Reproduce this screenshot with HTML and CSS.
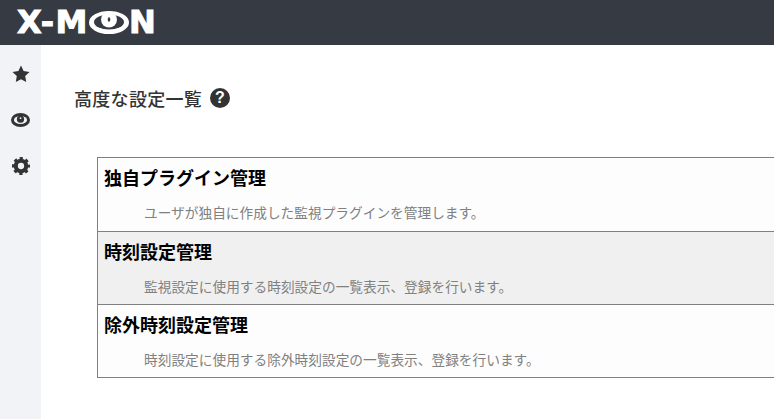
FILE: index.html
```html
<!DOCTYPE html>
<html lang="ja">
<head>
  <meta charset="UTF-8" />
  <title>高度な設定一覧</title>
  <link rel="stylesheet" href="styles.css">
</head>
<body>
  <header class="topbar">
    <div class="logo">
      <span class="logo-text">X-M</span>
      <svg class="logo-eye" width="40" height="23" viewBox="0 0 40 23">
        <ellipse cx="20" cy="11.5" rx="20" ry="11.5" fill="#fff"/>
        <ellipse cx="20" cy="11" rx="15" ry="7.5" fill="#363a43"/>
        <circle cx="20" cy="8.5" r="8" fill="#fff"/>
        <ellipse cx="20" cy="8.5" rx="1.3" ry="2.2" fill="#363a43"/>
      </svg>
      <span>N</span>
    </div>
  </header>
  <div class="layout">
    <nav class="sidebar">
      <svg class="nav-icon" width="18" height="18" viewBox="0 0 18 18">
        <path d="M9 .6l2.6 5.5 5.9.8-4.3 4.2 1 6-5.2-2.9-5.2 2.9 1-6L.5 6.9l5.9-.8z" fill="#333"/>
      </svg>
      <svg class="nav-icon" width="19" height="14" viewBox="0 0 19 14">
        <ellipse cx="9.5" cy="7" rx="9.5" ry="7" fill="#333"/>
        <ellipse cx="9.5" cy="7" rx="6.6" ry="4" fill="#f2f3f7"/>
        <circle cx="9.5" cy="6.2" r="3.6" fill="#333"/>
        <circle cx="9.5" cy="5.2" r="0.9" fill="#f2f3f7"/>
      </svg>
      <svg class="nav-icon" width="18" height="18" viewBox="0 0 20 20">
        <circle cx="10" cy="10" r="8.6" fill="none" stroke="#333" stroke-width="2.8" stroke-dasharray="3.6 3.155" stroke-dashoffset="1.8"/>
        <circle cx="10" cy="10" r="5.8" fill="none" stroke="#333" stroke-width="4.6"/>
      </svg>
    </nav>
    <main class="content">
      <h1 class="page-title">
        高度な設定一覧
        <span class="help">?</span>
      </h1>
      <div class="setting-list">
        <div class="setting-row">
          <h2>独自プラグイン管理</h2>
          <p>ユーザが独自に作成した監視プラグインを管理します。</p>
        </div>
        <div class="setting-row active">
          <h2>時刻設定管理</h2>
          <p>監視設定に使用する時刻設定の一覧表示、登録を行います。</p>
        </div>
        <div class="setting-row">
          <h2>除外時刻設定管理</h2>
          <p>時刻設定に使用する除外時刻設定の一覧表示、登録を行います。</p>
        </div>
      </div>
    </main>
  </div>
</body>
</html>
```

FILE: styles.css
```css
html, body {
  height: 100%;
  overflow: hidden;
}

body {
  margin: 0;
  font-family: "Noto Sans CJK JP", "Noto Sans", sans-serif;
  background: #fff;
  color: #333;
}

.topbar {
  height: 45px;
  background: #363a43;
  display: flex;
  align-items: center;
  padding-left: 17px;
}

.logo {
  display: flex;
  align-items: center;
  color: #fff;
  font-family: "DejaVu Sans", sans-serif;
  font-weight: bold;
  font-size: 32px;
  line-height: 45px;
  -webkit-text-stroke: 1px #fff;
}

.logo-text {
  letter-spacing: 1.6px;
}

.layout {
  display: flex;
  height: 374px;
}

.sidebar {
  width: 41px;
  background: #f2f3f7;
  display: flex;
  flex-direction: column;
  align-items: center;
  padding-top: 20px;
  box-sizing: border-box;
}

.nav-icon {
  display: block;
  margin-bottom: 30px;
}

.content {
  flex: 1;
  min-width: 0;
}

.page-title {
  margin: 42px 0 0 33px;
  height: 70px;
  font-size: 18px;
  font-weight: 500;
  letter-spacing: 0.3px;
  line-height: 23px;
  color: #333;
  display: flex;
  align-items: flex-start;
  gap: 8px;
}

.help {
  width: 20px;
  height: 20px;
  border-radius: 50%;
  background: #333;
  color: #fff;
  font-family: "Liberation Sans", Arial, sans-serif;
  font-size: 16px;
  font-weight: bold;
  line-height: 20px;
  text-align: center;
  margin-top: 1px;
}

.setting-list {
  margin-left: 56px;
  width: 700px;
  border: 1px solid #808080;
  box-sizing: border-box;
}

.setting-row {
  height: 73px;
  background: #fdfdfd;
  border-top: 1px solid #808080;
  box-sizing: border-box;
  padding: 7px 6px 0;
}

.setting-row:first-child {
  border-top: none;
}

.setting-row.active {
  background: #f0f0f0;
}

.setting-row h2 {
  margin: 0;
  font-size: 18px;
  font-weight: bold;
  line-height: 24px;
  color: #000;
}

.setting-row p {
  margin: 13px 0 0 40px;
  font-size: 13.7px;
  line-height: 20px;
  color: #808080;
}
```
